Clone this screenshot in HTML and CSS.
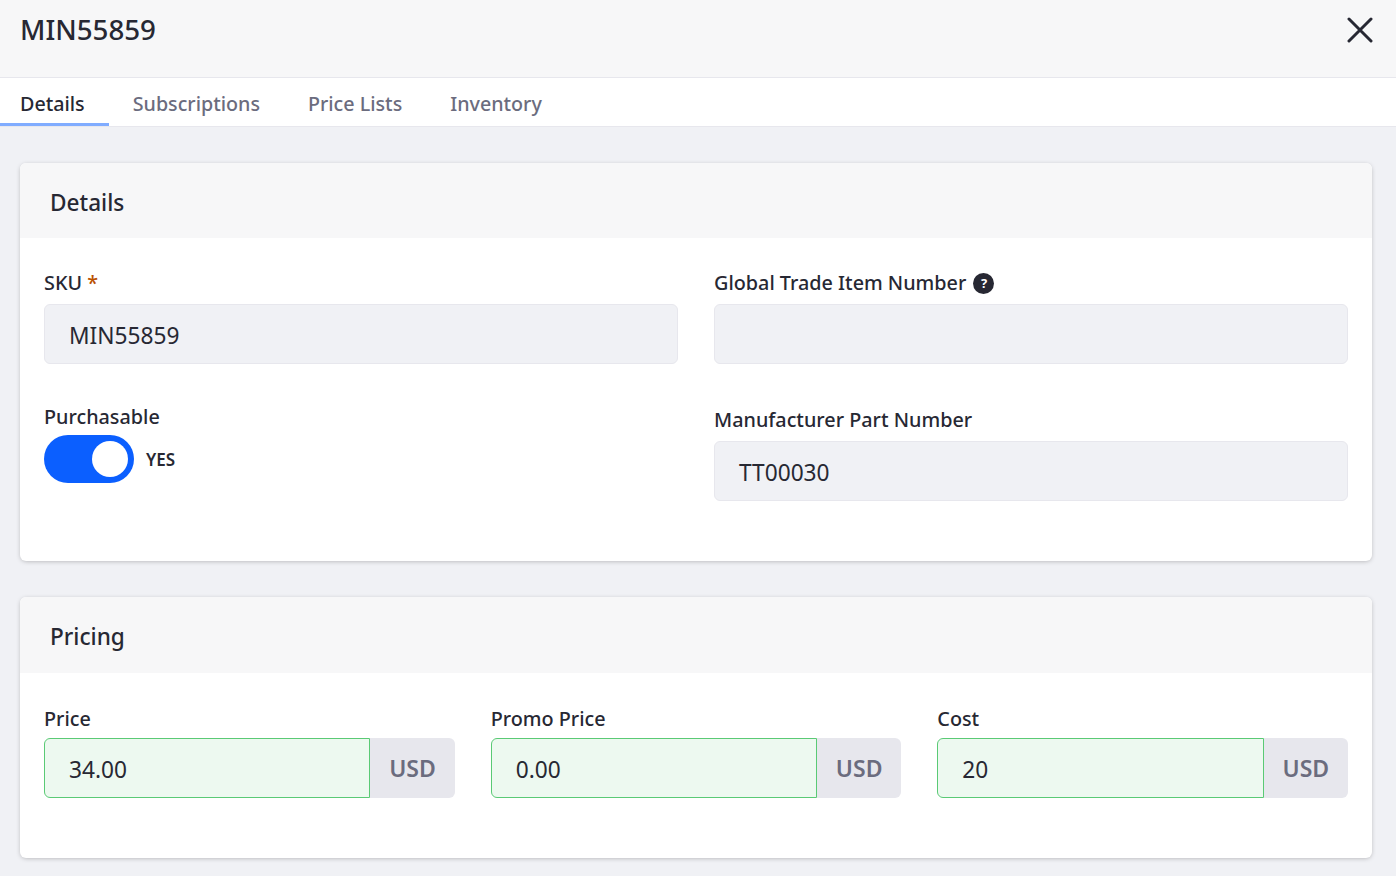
FILE: index.html
```html
<!DOCTYPE html>
<html lang="en">
	<head>
		<meta charset="UTF-8">
		<title>MIN55859</title>
		<link rel="stylesheet" href="styles.css">
	</head>
	<body>
		<header class="top">
			<h1 class="top-title">MIN55859</h1>
			<button class="close" aria-label="Close">
				<svg width="26" height="26" viewBox="0 0 26 26"><path d="M2 2L24 24M24 2L2 24" stroke="#272833" stroke-width="3" stroke-linecap="round" fill="none"/></svg>
			</button>
		</header>
		<nav class="tabs">
			<a class="tab active">Details</a>
			<a class="tab">Subscriptions</a>
			<a class="tab">Price Lists</a>
			<a class="tab">Inventory</a>
		</nav>
		<main class="content">
			<section class="card card-details">
				<h2 class="card-head">Details</h2>
				<div class="card-body columns">
					<div class="col">
						<div class="field">
							<label class="label">SKU <span class="req">*</span></label>
							<div class="input">MIN55859</div>
						</div>
						<div class="field-toggle">
							<label class="label label-toggle">Purchasable</label>
							<div class="toggle-row">
								<span class="toggle"><span class="knob"></span></span>
								<span class="toggle-text">YES</span>
							</div>
						</div>
					</div>
					<div class="col">
						<div class="field">
							<label class="label">Global Trade Item Number <span class="help">?</span></label>
							<div class="input"></div>
						</div>
						<div class="field field-mpn">
							<label class="label">Manufacturer Part Number</label>
							<div class="input">TT00030</div>
						</div>
					</div>
				</div>
			</section>
			<section class="card card-pricing">
				<h2 class="card-head">Pricing</h2>
				<div class="card-body prices">
					<div class="field">
						<label class="label label-price">Price</label>
						<div class="group">
							<div class="input valid">34.00</div>
							<span class="addon">USD</span>
						</div>
					</div>
					<div class="field">
						<label class="label label-price">Promo Price</label>
						<div class="group">
							<div class="input valid">0.00</div>
							<span class="addon">USD</span>
						</div>
					</div>
					<div class="field">
						<label class="label label-price">Cost</label>
						<div class="group">
							<div class="input valid">20</div>
							<span class="addon">USD</span>
						</div>
					</div>
				</div>
			</section>
		</main>
	</body>
</html>
```

FILE: styles.css
```css
* {
	box-sizing: border-box;
	margin: 0;
	padding: 0;
}

body {
	background-color: #f0f1f5;
	color: #272833;
	font-family: "Noto Sans", "Open Sans", sans-serif;
	height: 876px;
	overflow: hidden;
}

.top {
	display: flex;
	justify-content: space-between;
	height: 78px;
	padding: 0 23px 0 20px;
	background-color: #f7f7f8;
	border-bottom: 1px solid #e7e7ed;
}

.top-title {
	margin-top: 9px;
	font-size: 27.7px;
	line-height: 40px;
	font-weight: 500;
}

.close {
	width: 26px;
	height: 26px;
	margin-top: 17px;
	background: none;
	border: 0;
}

.tabs {
	display: flex;
	height: 49px;
	background-color: #fff;
	border-bottom: 1px solid #e7e7ed;
}

.tab {
	height: 48px;
	padding: 11px 24px 0 24px;
	color: #6b6c7e;
	font-size: 19.7px;
	line-height: 30px;
	font-weight: 500;
}

.tab.active {
	padding-left: 20px;
	color: #272833;
	border-bottom: 3px solid #80acff;
}

.content {
	display: flex;
	flex-direction: column;
	gap: 36px;
	padding: 36px 24px 0 20px;
}

.card {
	background-color: #fff;
	border-radius: 6px;
	box-shadow: 0 1px 5px -1px rgba(0, 0, 0, 0.3);
	overflow: hidden;
}

.card-details {
	height: 398px;
}

.card-pricing {
	height: 261px;
}

.card-head {
	height: 75px;
	padding: 22px 30px 0;
	background-color: #f7f7f8;
	font-size: 22.6px;
	line-height: 36px;
	font-weight: 500;
}

.card-pricing .card-head {
	height: 76px;
}

.card-body {
	padding: 30px 24px 0;
}

.card-pricing .card-body {
	padding-top: 31px;
}

.columns {
	display: grid;
	grid-template-columns: 634px 634px;
	gap: 36px;
}

.prices {
	display: grid;
	grid-template-columns: repeat(3, 1fr);
	gap: 36px;
}

.label {
	display: block;
	height: 36px;
	font-size: 19.8px;
	line-height: 30px;
	font-weight: 500;
}

.label-toggle {
	height: 33px;
}

.label-price {
	height: 34px;
}

.req {
	color: #b95000;
}

.help {
	display: inline-block;
	width: 21px;
	height: 21px;
	margin-left: 2px;
	border-radius: 50%;
	background-color: #272833;
	color: #fff;
	font-size: 13px;
	line-height: 21px;
	font-weight: 700;
	text-align: center;
	vertical-align: 2px;
}

.input {
	height: 60px;
	padding-left: 24px;
	background-color: #f0f1f5;
	border: 1px solid #e7e7ed;
	border-radius: 6px;
	font-size: 22.7px;
	line-height: 60px;
	padding-top: 1px;
}

.field-toggle {
	margin-top: 38px;
}

.field-mpn {
	margin-top: 41px;
}

.toggle-row {
	display: flex;
	align-items: center;
	gap: 12px;
}

.toggle {
	display: flex;
	justify-content: flex-end;
	align-items: center;
	width: 90px;
	height: 48px;
	padding-right: 6px;
	background-color: #0b5fff;
	border-radius: 24px;
}

.knob {
	width: 36px;
	height: 36px;
	background-color: #fff;
	border-radius: 50%;
}

.toggle-text {
	font-size: 17px;
	font-weight: 600;
}

.group {
	display: flex;
}

.group .input {
	flex: 1;
	border-radius: 6px 0 0 6px;
}

.input.valid {
	background-color: #edf9f0;
	border-color: #5aca75;
}

.addon {
	width: 84.4px;
	height: 60px;
	background-color: #e7e7ed;
	border-radius: 0 6px 6px 0;
	color: #6b6c7e;
	font-size: 23px;
	line-height: 60px;
	font-weight: 600;
	text-align: center;
}
```
